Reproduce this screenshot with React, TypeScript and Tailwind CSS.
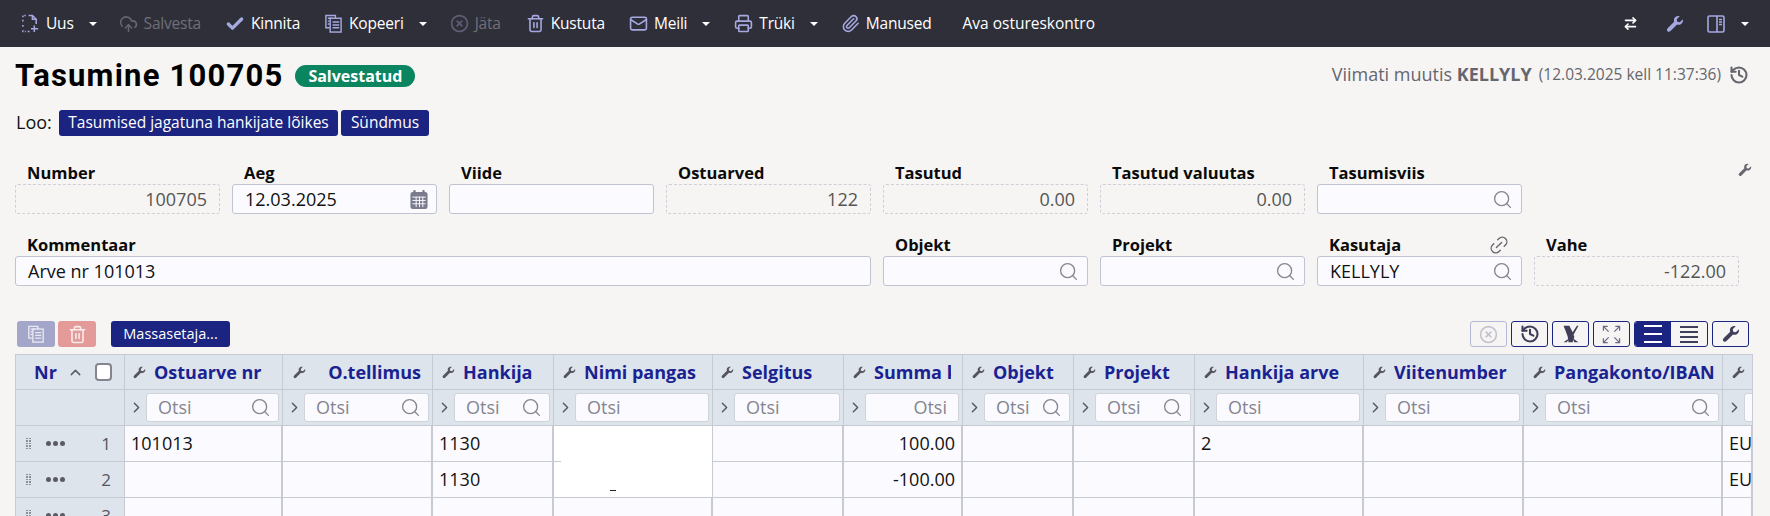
import { CircleX, CloudUpload, History, Link2, Mail, Paperclip, Printer, Search, Trash2, ArrowRightLeft, ChevronRight, ChevronUp, Check } from 'lucide-react'

const font = "[font-family:'Open_Sans','Noto_Sans',sans-serif]"

function Wrench({ className }: { className?: string }) {
  return (
    <svg viewBox="0 0 24 24" className={className} fill="currentColor">
      <path d="M22.4 5.6l-4 4-3.4-.7-.7-3.4 4-4c-3-.9-6.2.3-7.4 3-.6 1.5-.6 3 0 4.400L2.200 17.600c-1.300 1.300-1.300 2.900-.2 4 1.100 1.100 2.800 1.100 4-.2l8.800-8.800c1.400.6 2.900.6 4.400 0 2.800-1.200 4-4.500 3.200-7z" />
    </svg>
  )
}

function Caret() {
  return <span className="h-0 w-0 border-x-[4px] border-t-[4px] border-x-transparent border-t-white" />
}

function NewFile({ className }: { className?: string }) {
  return (
    <svg viewBox="0 0 18 20" className={className} fill="none" stroke="currentColor" strokeWidth="1.6">
      <path d="M7 1.500h4l4 4v5" />
      <path d="M1 3.500v-2h3M1 6v3M1 11.500v3M1 17v1.500h3M6 18.500h3" strokeDasharray="2 1.500" />
      <path d="M11 1.500v4h4" />
      <path d="M13 12v7M9.500 15.500h7.500" />
    </svg>
  )
}

function CopyDoc({ className }: { className?: string }) {
  return (
    <svg viewBox="0 0 18 20" className={className} fill="none" stroke="currentColor" strokeWidth="1.5">
      <path d="M5 14.500H1V1.500h10v3" />
      <rect x="5.500" y="4.500" width="11.500" height="14.500" />
      <path d="M3 4.500h5M3 7.500h2M3 10.500h2M8 8.500h7M8 11.500h7M8 14.500h7" />
    </svg>
  )
}

function PanelIcon({ className }: { className?: string }) {
  return (
    <svg viewBox="0 0 18 18" className={className} fill="none" stroke="currentColor" strokeWidth="1.600">
      <rect x="1" y="1" width="16" height="16" rx="1.500" />
      <path d="M10 1v16M12 4.500h3M12 7h3M12 9.500h3" />
    </svg>
  )
}

function CalendarIcon() {
  return (
    <svg viewBox="0 0 18 20" className="-mr-[4px] h-[19px] w-[18px] text-[#7b7b8e]">
      <rect x="0" y="2" width="18" height="18" rx="2.500" fill="currentColor" />
      <rect x="3" y="0" width="2.500" height="4" rx="1" fill="currentColor" />
      <rect x="12.500" y="0" width="2.500" height="4" rx="1" fill="currentColor" />
      <path d="M2 7.500h14M2 11h14M2 14.500h14M6 7v11M9.500 7v11M13 7v11" stroke="#fbfbff" strokeWidth="1" />
    </svg>
  )
}

function Sep() {
  return (
    <svg viewBox="0 0 24 24" className="h-[20px] w-[20px]" fill="currentColor">
      <path d="M3 2h7l4 8 5-8h2l-6 11 1 2-2 7H9l-1-7-3-8z" />
      <path d="M3 22l7-5-3 5zM21 22l-7-5 2 5z" />
    </svg>
  )
}

function Expand() {
  return (
    <svg viewBox="0 0 20 20" className="h-[19px] w-[19px] text-[#6a6a85]" fill="none" stroke="currentColor" strokeWidth="1.300">
      <path d="M1.500 6V1.500H6M14 1.500h4.500V6M1.500 14v4.500H6M14 18.500h4.500V14" />
      <path d="M2 2l5 5M18 2l-5 5M2 18l5-5M18 18l-5-5" />
    </svg>
  )
}

type ToolItem = { label: string; icon: React.ReactNode; ml: string; caret?: boolean; dim?: boolean }

const iconCls = 'h-[19px] w-[19px] text-[#a5a9e0]'

const toolItems: ToolItem[] = [
  { label: 'Uus', icon: <NewFile className={iconCls} />, ml: 'ml-0', caret: true },
  { label: 'Salvesta', icon: <CloudUpload className="h-[20px] w-[19px] text-[#666672]" />, ml: 'ml-[22px]', dim: true },
  { label: 'Kinnita', icon: <Check className="h-[20px] w-[20px] text-[#a5a9e0]" strokeWidth={4} />, ml: 'ml-[24px]' },
  { label: 'Kopeeri', icon: <CopyDoc className={iconCls} />, ml: 'ml-[24px]', caret: true },
  { label: 'Jäta', icon: <CircleX className="h-[19px] w-[19px] text-[#5f6075]" />, ml: 'ml-[23px]', dim: true },
  { label: 'Kustuta', icon: <Trash2 className={iconCls} />, ml: 'ml-[25px]' },
  { label: 'Meili', icon: <Mail className={iconCls} />, ml: 'ml-[24px]', caret: true },
  { label: 'Trüki', icon: <Printer className={iconCls} />, ml: 'ml-[24px]', caret: true },
  { label: 'Manused', icon: <Paperclip className={iconCls} />, ml: 'ml-[23px]' },
]

function Toolbar() {
  return (
    <div className="flex h-[47px] items-center bg-[#2f2f3a] pl-[21px] pr-[21px] text-[15.500px] tracking-[-0.2px] text-white">
      {toolItems.map((t) => (
        <div key={t.label} className={`flex items-center gap-[6px] ${t.ml}`}>
          {t.icon}
          <span className={t.dim ? 'text-[#6f6f78]' : ''}>{t.label}</span>
          {t.caret && <span className="ml-[9px] flex"><Caret /></span>}
        </div>
      ))}
      <span className="ml-[31px] tracking-normal">Ava ostureskontro</span>
      <div className="ml-auto flex items-center">
        <ArrowRightLeft className="h-[15px] w-[15px] text-white" strokeWidth={2.500} />
        <Wrench className="ml-[28px] h-[18px] w-[18px] text-[#a5a9e0]" />
        <PanelIcon className="ml-[23px] h-[18px] w-[18px] text-[#a5a9e0]" />
        <span className="ml-[16px] flex"><Caret /></span>
      </div>
    </div>
  )
}

function Field({ label, value, kind, align, icon, span, extra }: {
  label: string
  value?: string
  kind: 'ro' | 'in'
  align?: 'right'
  icon?: React.ReactNode
  span?: string
  extra?: React.ReactNode
}) {
  return (
    <div className={span}>
      <div className="flex h-[22px] items-center justify-between pl-[12px] pr-[14px] text-[16.500px] leading-[22px] font-bold text-[#0b0b0b]">
        {label}
        {extra}
      </div>
      <div
        className={`flex h-[30px] items-center rounded-[3px] px-[12px] text-[18px] ${
          kind === 'ro' ? 'border border-dashed border-[#ccd0d8] text-[#555]' : 'border border-[#bfc4d0] bg-[#fbfbff] text-[#111]'
        } ${align === 'right' ? 'justify-end' : 'justify-between'}`}
      >
        {value && <span>{value}</span>}
        {icon && <span className="ml-auto flex">{icon}</span>}
      </div>
    </div>
  )
}

const search = <Search className="-mr-[4px] h-[21px] w-[21px] text-[#85858f]" strokeWidth={1.500} />

type Col = { title: string; pad: string; filter: boolean; right?: boolean; inputRight?: boolean }

const cols: Col[] = [
  { title: 'Ostuarve nr', pad: 'pl-[8px] pr-[7px]', filter: true },
  { title: 'O.tellimus', pad: 'pl-[10px] pr-[11px]', filter: true, right: true },
  { title: 'Hankija', pad: 'pl-[9px] pr-[7px]', filter: true },
  { title: 'Nimi pangas', pad: 'pl-[9px] pr-[7px]', filter: false },
  { title: 'Selgitus', pad: 'pl-[8px] pr-[7px]', filter: false },
  { title: 'Summa kokku', pad: 'pl-[9px] pr-[11px]', filter: false, inputRight: true },
  { title: 'Objekt', pad: 'pl-[9px] pr-[7px]', filter: true },
  { title: 'Projekt', pad: 'pl-[9px] pr-[7px]', filter: true },
  { title: 'Hankija arve', pad: 'pl-[9px] pr-[7px]', filter: false },
  { title: 'Viitenumber', pad: 'pl-[9px] pr-[7px]', filter: false },
  { title: 'Pangakonto/IBAN', pad: 'pl-[9px] pr-[7px]', filter: true },
  { title: '', pad: 'pl-[9px] pr-[7px]', filter: false },
]

const rows: string[][] = [
  ['101013', '', '1130', '', '', '100.00', '', '', '2', '', '', 'EUR'],
  ['', '', '1130', '', '', '-100.00', '', '', '', '', '', 'EUR'],
  ['', '', '', '', '', '', '', '', '', '', '', ''],
]

const gridCols = 'grid-cols-[109px_158px_150px_121px_159px_131px_119px_111px_121px_169px_160px_199px_30px]'

function ActionBtn({ children, className }: { children: React.ReactNode; className?: string }) {
  return (
    <button className={`flex h-[26px] w-[37px] items-center justify-center rounded-[3px] border border-[#1b2480] text-[#3f3f5a] ${className ?? ''}`}>
      {children}
    </button>
  )
}

function Grip() {
  return (
    <span className="grid grid-cols-2 gap-x-[1px] gap-y-[1px]">
      {Array.from({ length: 10 }).map((_, i) => (
        <span key={i} className="h-[1.500px] w-[2px] bg-[#8a8f99]" />
      ))}
    </span>
  )
}

function Table() {
  return (
    <div className={`ml-[15px] grid w-[1738px] border-l border-[#c5cad3] ${gridCols} auto-rows-min text-[18px]`}>
      {/* header */}
      <div className="flex h-[36px] items-center border-t border-b border-r border-[#c5cad3] bg-[#dee4ec] pl-[18px] text-[18px] font-bold text-[#1a2291]">
        <span>Nr</span>
        <ChevronUp className="ml-[10px] h-[17px] w-[17px] text-[#5b5b66]" />
        <span className="ml-[11px] h-[18px] w-[17px] rounded-[4px] border-2 border-[#85858f] bg-white" />
      </div>
      {cols.map((c) => (
        <div key={c.title} className={`flex h-[36px] items-center overflow-hidden border-t border-b border-r border-[#c5cad3] bg-[#dee4ec] ${c.pad} text-[18px] font-bold whitespace-nowrap text-[#1a2291]`}>
          <Wrench className="h-[13px] w-[13px] shrink-0 text-[#55555f]" />
          <span className={`min-w-0 overflow-hidden ${c.right ? 'ml-auto' : 'ml-[8px]'}`}>{c.title}</span>
        </div>
      ))}

      {/* filters */}
      <div className="h-[36px] border-b border-r border-[#c5cad3] bg-[#dee4ec]" />
      {cols.map((c) => (
        <div key={c.title} className="flex h-[36px] items-center overflow-hidden border-b border-r border-[#c5cad3] bg-[#dee4ec] pl-[3px] pr-[3px]">
          <ChevronRight className="h-[17px] w-[17px] shrink-0 text-[#55555f]" />
          <div className={`ml-[1px] flex h-[29px] min-w-0 flex-1 items-center rounded-[3px] border border-[#cfd3da] bg-[#fbfbff] px-[11px] text-[18px] text-[#85858f] ${c.inputRight ? 'justify-end' : ''}`}>
            <span>Otsi</span>
            {c.filter && <span className="ml-auto flex">{search}</span>}
          </div>
        </div>
      ))}

      {/* rows */}
      {rows.map((r, i) => (
        <Row key={i} n={i + 1} cells={r} />
      ))}
    </div>
  )
}

function Row({ n, cells }: { n: number; cells: string[] }) {
  return (
    <>
      <div className="flex h-[36px] items-center border-r border-b border-[#c5cad3] bg-[#dee4ec] pl-[10px] text-[17px] text-[#55555f]">
        <Grip />
        <span className="ml-[15px] flex gap-[2px]">
          <span className="h-[5px] w-[5px] rounded-full bg-[#5b5b66]" />
          <span className="h-[5px] w-[5px] rounded-full bg-[#5b5b66]" />
          <span className="h-[5px] w-[5px] rounded-full bg-[#5b5b66]" />
        </span>
        <span className="mr-[13px] ml-auto">{n}</span>
      </div>
      {cells.map((v, i) => {
        if (i === 3 && n < 3) {
          // Nimi pangas is one blank white block over both rows
          return (
            <div key={i} className={`relative h-[36px] border-r border-[#c5cad3] bg-white ${n === 2 ? 'border-b' : ''}`}>
              {n === 1 && <span className="absolute bottom-0 left-0 h-px w-[7px] bg-[#c5cad3]" />}
              {n === 2 && <span className="absolute top-[28px] left-[56px] h-px w-[6px] bg-[#222]" />}
            </div>
          )
        }
        const isNum = i === 5
        return (
          <div
            key={i}
            className={`flex h-[36px] items-center overflow-hidden border-r-2 border-b border-r-[#c5cad3] border-b-[#c5cad3] bg-[#fbfbff] whitespace-nowrap text-[#111] ${
              isNum ? 'justify-end pr-[6px]' : 'pl-[6px]'
            }`}
          >
            {v}
          </div>
        )
      })}
    </>
  )
}

export default function App() {
  return (
    <div className={`h-[516px] w-[1770px] overflow-hidden bg-[#f6f5f3] ${font}`}>
      <Toolbar />

      <div className="flex items-start justify-between pt-[14px] pr-[21px] pl-[15px]">
        <div className="flex items-center">
          <h1 className="text-[31px] leading-[30px] font-bold tracking-[1.2px] text-black [font-family:'Roboto',sans-serif]">Tasumine 100705</h1>
          <span className="ml-[12px] flex h-[22px] w-[120px] items-center justify-center rounded-full bg-[#0b8460] text-[16px] font-bold text-white">Salvestatud</span>
        </div>
        <div className="flex items-center text-[#66666e]">
          <span className="text-[18px]">Viimati muutis <b>KELLYLY</b></span>
          <span className="ml-[7px] text-[15.500px]">(12.03.2025 kell 11:37:36)</span>
          <History className="ml-[8px] h-[20px] w-[20px]" strokeWidth={2.500} />
        </div>
      </div>

      <div className="mt-[18px] flex items-center pl-[16px]">
        <span className="w-[43px] text-[18px] text-[#111]">Loo:</span>
        <button className="flex h-[26px] w-[279px] items-center justify-center rounded-[3px] bg-[#1b2480] text-[15.500px] text-white">Tasumised jagatuna hankijate lõikes</button>
        <button className="ml-[3px] flex h-[26px] w-[88px] items-center justify-center rounded-[3px] bg-[#1b2480] text-[15.500px] text-white">Sündmus</button>
      </div>

      <div className="relative mt-[26px] grid grid-cols-[repeat(8,205px)] gap-x-[12px] gap-y-[20px] pl-[15px]">
        <Field label="Number" value="100705" kind="ro" align="right" />
        <Field label="Aeg" value="12.03.2025" kind="in" icon={<CalendarIcon />} />
        <Field label="Viide" kind="in" />
        <Field label="Ostuarved" value="122" kind="ro" align="right" />
        <Field label="Tasutud" value="0.00" kind="ro" align="right" />
        <Field label="Tasutud valuutas" value="0.00" kind="ro" align="right" />
        <Field label="Tasumisviis" kind="in" icon={search} />
        <div className="flex justify-end pt-[1px]">
          <Wrench className="-mr-[13px] h-[14px] w-[14px] text-[#66666e]" />
        </div>
        <Field label="Kommentaar" value="Arve nr 101013" kind="in" span="col-span-4" />
        <Field label="Objekt" kind="in" icon={search} />
        <Field label="Projekt" kind="in" icon={search} />
        <Field label="Kasutaja" value="KELLYLY" kind="in" icon={search} extra={<Link2 className="-rotate-45 -mr-[2px] h-[22px] w-[22px] text-[#66666e]" strokeWidth={1.500} />} />
        <Field label="Vahe" value="-122.00" kind="ro" align="right" />
      </div>

      <div className="mt-[35px] flex items-center justify-between pr-[21px] pl-[17px]">
        <div className="flex items-center">
          <button className="flex h-[26px] w-[38px] items-center justify-center rounded-[3px] bg-[#a3a6c9] text-[#e8e8f2]"><CopyDoc className="h-[18px] w-[18px]" /></button>
          <button className="ml-[3px] flex h-[26px] w-[38px] items-center justify-center rounded-[3px] bg-[#e39a98] text-[#fbecec]"><Trash2 className="h-[19px] w-[19px]" /></button>
          <button className="ml-[15px] flex h-[26px] w-[119px] items-center justify-center rounded-[3px] bg-[#1b2480] text-[14.500px] text-white">Massasetaja...</button>
        </div>
        <div className="flex items-center gap-[4px]">
          <ActionBtn className="border-[#b4b7d6] text-[#c2c3cf]"><CircleX className="h-[19px] w-[19px]" /></ActionBtn>
          <ActionBtn><History className="h-[20px] w-[20px]" strokeWidth={2.500} /></ActionBtn>
          <ActionBtn><Sep /></ActionBtn>
          <ActionBtn><Expand /></ActionBtn>
          <div className="flex h-[26px] w-[74px] overflow-hidden rounded-[3px] border border-[#1b2480]">
            <span className="flex w-[37px] flex-col items-center justify-center gap-[6px] bg-[#1b2480]">
              <span className="h-[2px] w-[18px] bg-white" />
              <span className="h-[2px] w-[18px] bg-white" />
              <span className="h-[2px] w-[18px] bg-white" />
            </span>
            <span className="flex w-[37px] flex-col items-center justify-center gap-[3px]">
              <span className="h-[2px] w-[18px] bg-[#3f3f5a]" />
              <span className="h-[2px] w-[18px] bg-[#3f3f5a]" />
              <span className="h-[2px] w-[18px] bg-[#3f3f5a]" />
              <span className="h-[2px] w-[18px] bg-[#3f3f5a]" />
            </span>
          </div>
          <ActionBtn><Wrench className="h-[18px] w-[18px]" /></ActionBtn>
        </div>
      </div>

      <div className="mt-[7px]">
        <Table />
      </div>
    </div>
  )
}
